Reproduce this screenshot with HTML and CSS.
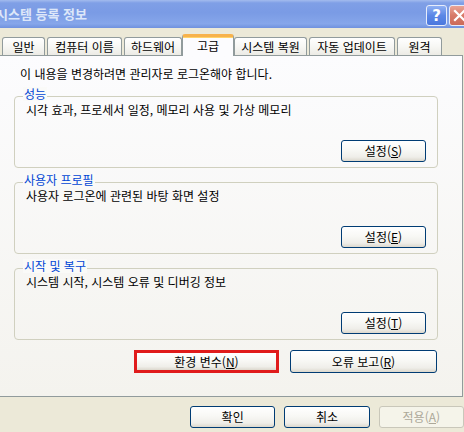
FILE: index.html
```html
<!DOCTYPE html>
<html lang="ko">

<head>
  <meta charset="UTF-8">
  <meta name="viewport" content="width=device-width, initial-scale=1.0">
  <title>시스템 등록 정보</title>
  <link rel="stylesheet" href="styles.css">
</head>

<body>
  <div class="titlebar">
    <span class="title">시스템 등록 정보</span>
    <div class="caption-btns">
      <span class="cap cap-help">?</span>
      <span class="cap cap-close">
        <svg width="13" height="13" viewBox="0 0 13 13">
          <path d="M2 2 L11 11 M11 2 L2 11" stroke="#fff" stroke-width="2.2" stroke-linecap="square" />
        </svg>
      </span>
    </div>
  </div>

  <div class="tabs">
    <div class="tab tab-general">일반</div>
    <div class="tab tab-computer">컴퓨터 이름</div>
    <div class="tab tab-hardware">하드웨어</div>
    <div class="tab tab-advanced active">고급</div>
    <div class="tab tab-restore">시스템 복원</div>
    <div class="tab tab-update">자동 업데이트</div>
    <div class="tab tab-remote">원격</div>
  </div>

  <div class="panel">
    <p class="notice">이 내용을 변경하려면 관리자로 로그온해야 합니다.</p>

    <div class="group">
      <div class="group-title">성능</div>
      <p class="group-text">시각 효과, 프로세서 일정, 메모리 사용 및 가상 메모리</p>
      <div class="group-actions">
        <button class="btn btn-setting">설정(<u>S</u>)</button>
      </div>
    </div>

    <div class="group">
      <div class="group-title">사용자 프로필</div>
      <p class="group-text">사용자 로그온에 관련된 바탕 화면 설정</p>
      <div class="group-actions">
        <button class="btn btn-setting">설정(<u>E</u>)</button>
      </div>
    </div>

    <div class="group">
      <div class="group-title">시작 및 복구</div>
      <p class="group-text">시스템 시작, 시스템 오류 및 디버깅 정보</p>
      <div class="group-actions">
        <button class="btn btn-setting">설정(<u>T</u>)</button>
      </div>
    </div>

    <div class="panel-actions">
      <button class="btn btn-wide highlight">환경 변수(<u>N</u>)</button>
      <button class="btn btn-wide">오류 보고(<u>R</u>)</button>
    </div>
  </div>

  <div class="dialog-actions">
    <button class="btn btn-dialog">확인</button>
    <button class="btn btn-dialog">취소</button>
    <button class="btn btn-dialog" disabled>적용(<u>A</u>)</button>
  </div>
</body>

</html>
```

FILE: styles.css
```css
body {
  margin: 0;
  width: 464px;
  height: 432px;
  overflow: hidden;
  background-color: #ece9d8;
  font-family: "Noto Sans CJK KR", "Noto Sans", sans-serif;
  font-size: 12px;
  color: #000;
}

p {
  margin: 0;
}

/* Title bar */
.titlebar {
  height: 28px;
  display: flex;
  justify-content: space-between;
  background: linear-gradient(180deg, #a3bbee 0, #7f9fe6 3px, #7a9be5 45%, #86a6ea 85%, #6f91de 100%);
}

.title {
  margin-left: -4px;
  line-height: 28px;
  font-weight: bold;
  font-size: 13px;
  color: #dde7f9;
}

.caption-btns {
  display: flex;
  gap: 2px;
  margin-top: 5px;
  margin-right: -6px;
}

.cap {
  width: 21px;
  height: 21px;
  box-sizing: border-box;
  border: 1px solid #e6ecfb;
  border-radius: 3px;
  display: flex;
  align-items: center;
  justify-content: center;
}

.cap-help {
  background: linear-gradient(180deg, #8fb0f3 0, #5b87e6 50%, #4b78de 100%);
  color: #fff;
  font-family: "DejaVu Sans", sans-serif;
  font-weight: bold;
  font-size: 15px;
}

.cap-close {
  background: linear-gradient(180deg, #e9a496 0, #d77a68 50%, #cc6a58 100%);
}

/* Tabs */
.tabs {
  display: flex;
  gap: 2px;
  padding: 9px 0 0 2px;
  height: 27px;
  box-sizing: border-box;
}

.tab {
  height: 18px;
  box-sizing: border-box;
  border: 1px solid #919b9c;
  border-bottom: none;
  border-radius: 3px 3px 0 0;
  background: linear-gradient(180deg, #ffffff 0, #f7f7f4 50%, #ecebe5 100%);
  line-height: 17px;
  text-align: center;
}

.tab-general { width: 43px; }
.tab-computer { width: 75px; }
.tab-hardware { width: 58px; }
.tab-advanced { width: 52px; }
.tab-restore { width: 73px; }
.tab-update { width: 86px; }
.tab-remote { width: 45px; }

.tab.active {
  position: relative;
  z-index: 1;
  height: 22px;
  margin: -3px -2px -1px -2px;
  border-top: 3px solid #f7b24c;
  background: #fcfcfe;
  line-height: 18px;
  box-shadow: inset 0 1px 0 #ffd36a;
}

/* Tab panel */
.panel {
  width: 463px;
  height: 342px;
  box-sizing: border-box;
  border: 1px solid #919b9c;
  border-left: none;
  background: linear-gradient(180deg, #fcfcfe 0, #f4f3ee 100%);
  padding-top: 10px;
}

.notice {
  padding-left: 20px;
  line-height: 16px;
}

.group {
  height: 72px;
  box-sizing: border-box;
  margin: 14px 24px 0 14px;
  border: 1px solid #d0d0bf;
  border-radius: 4px;
  display: flex;
  flex-direction: column;
}

.group-title {
  width: fit-content;
  margin: -10px 0 0 8px;
  padding: 0 1px;
  line-height: 14px;
  background-color: #fafaf8;
  color: #0046d5;
}

.group-text {
  margin-top: 1px;
  padding-left: 11px;
  line-height: 16px;
}

.group-actions {
  margin-top: auto;
  display: flex;
  justify-content: flex-end;
  padding: 0 11px 5px 0;
}

.panel-actions {
  display: flex;
  justify-content: flex-end;
  align-items: center;
  gap: 11px;
  margin-top: 10px;
  padding-right: 25px;
}

.dialog-actions {
  display: flex;
  gap: 9px;
  padding: 9px 0 0 190px;
}

/* XP buttons */
.btn {
  box-sizing: border-box;
  height: 22px;
  padding: 0;
  border: 1px solid #003c74;
  border-radius: 3px;
  background: linear-gradient(180deg, #ffffff 0, #f8f8f5 45%, #efeee9 80%, #dcd8cd 100%);
  font-family: inherit;
  font-size: 12px;
  color: #000;
  line-height: 18px;
}

.btn-setting {
  width: 85px;
}

.btn-wide {
  width: 147px;
  height: 23px;
}

.btn-dialog {
  width: 86px;
}

.btn:disabled {
  border-color: #c9c7ba;
  background: #f5f4ea;
  color: #aca899;
}

.highlight {
  width: 145px;
  border: 3px solid #e01b1b;
  border-radius: 0;
}
```
